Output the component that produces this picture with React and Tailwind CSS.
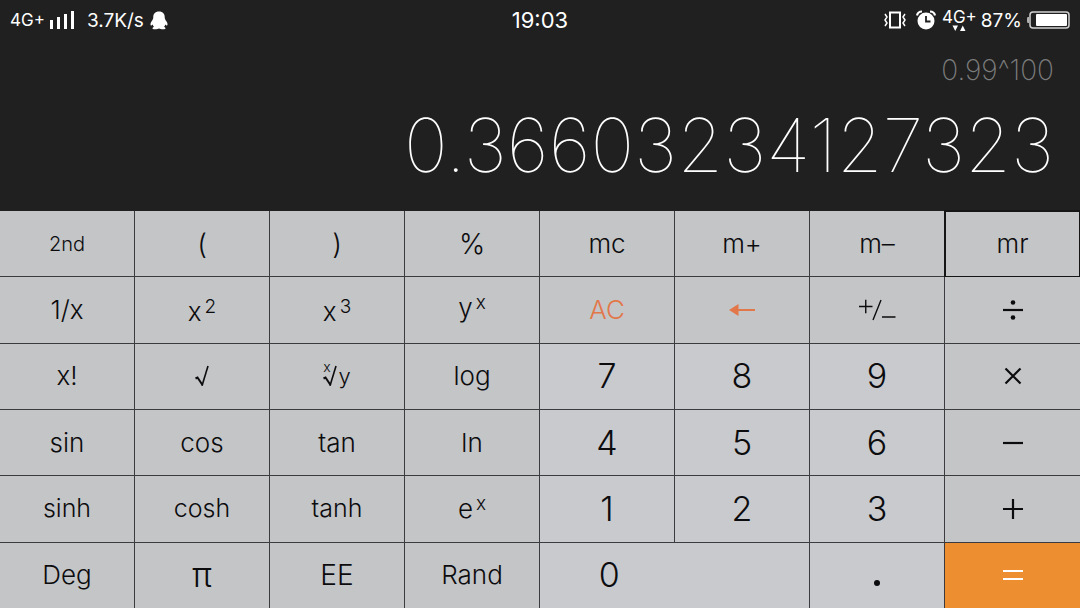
import React, { useState } from 'react';

const Power = ({ base, exp, className = '' }) => (
  <span className={`flex items-start gap-[3px] ${className}`}>
    <span className="pt-1">{base}</span>
    <sup className="top-0 text-[19px] leading-6">{exp}</sup>
  </span>
);

const RootSign = ({ className }) => (
  <svg className={className} viewBox="0 0 14 22" fill="none" stroke="currentColor" aria-hidden="true">
    <path d="M0.5 13.5L2.500 12.500L7.500 20" strokeWidth="2" />
    <path d="M7 20.8L13 1" strokeWidth="1.6" />
  </svg>
);

const NthRoot = () => (
  <span className="flex items-center">
    <span className="-mr-2 self-start text-[14px] leading-[4px]">x</span>
    <RootSign className="h-[22px] w-[14px]" />
    <span className="pl-[2px] text-[22px]">y</span>
  </span>
);

const PlusMinus = () => (
  <svg className="h-[22px] w-[38px]" viewBox="0 0 38 22" fill="none" stroke="currentColor" strokeWidth="1.4" aria-hidden="true">
    <path d="M1 7.5H14.500M7.750 0.800V14.300M15 21L23 1M24 18H37.500" />
  </svg>
);

const BackArrow = () => (
  <svg className="h-[12px] w-[26px]" viewBox="0 0 26 12" fill="currentColor" aria-hidden="true">
    <path d="M0 6L9.500 0V12Z" />
    <rect x="8" y="5" width="18" height="2" />
  </svg>
);

const OPERATORS = {
  divide: (
    <>
      <path d="M1 11H21" />
      <circle cx="11" cy="3.500" r="2.300" fill="currentColor" stroke="none" />
      <circle cx="11" cy="18.500" r="2.300" fill="currentColor" stroke="none" />
    </>
  ),
  multiply: <path d="M3.500 3.500L18.500 18.500M18.500 3.500L3.500 18.500" />,
  subtract: <path d="M1 11H21" />,
  add: <path d="M1 11H21M11 1V21" />,
  equals: <path d="M1 7H21M1 15H21" />,
};

const Operator = ({ name }) => (
  <svg className="size-[22px]" viewBox="0 0 22 22" fill="none" stroke="currentColor" strokeWidth="2.2" aria-hidden="true">
    {OPERATORS[name]}
  </svg>
);

const FN = 'bg-[#c4c5c7] text-[26px]';
const FN_SMALL = 'bg-[#c4c5c7] text-[25px]';
const FN_LARGE = 'bg-[#c4c5c7] text-[28px]';
const NUM = 'bg-[#c9cace] text-[34px]';

const KEYS = [
  { id: '2nd', style: 'bg-[#c4c5c7] text-[20px]' },
  { id: '(', style: FN_LARGE },
  { id: ')', style: FN_LARGE },
  { id: '%', style: FN_LARGE },
  { id: 'mc' },
  { id: 'm+' },
  { id: 'm–' },
  { id: 'mr', style: 'bg-[#c4c5c7] text-[26px] outline-2 -outline-offset-1 outline-[#151515]' },

  { id: '1/x' },
  { id: 'x squared', label: <Power base="x" exp="2" /> },
  { id: 'x cubed', label: <Power base="x" exp="3" /> },
  { id: 'y to the x', label: <Power base="y" exp="x" className="pb-2" /> },
  { id: 'AC', style: 'bg-[#c4c5c7] text-[26px] text-[#e2774a]' },
  { id: 'backspace', label: <BackArrow />, style: 'bg-[#c4c5c7] text-[#e2774a]' },
  { id: 'plus minus', label: <PlusMinus /> },
  { id: 'divide', label: <Operator name="divide" /> },

  { id: 'x!' },
  { id: 'square root', label: <RootSign className="h-[22px] w-[14px]" /> },
  { id: 'x root of y', label: <NthRoot /> },
  { id: 'log' },
  { id: '7', style: NUM },
  { id: '8', style: NUM },
  { id: '9', style: NUM },
  { id: 'multiply', label: <Operator name="multiply" /> },

  { id: 'sin' },
  { id: 'cos' },
  { id: 'tan' },
  { id: 'ln' },
  { id: '4', style: NUM },
  { id: '5', style: NUM },
  { id: '6', style: NUM },
  { id: 'subtract', label: <Operator name="subtract" /> },

  { id: 'sinh', style: FN_SMALL },
  { id: 'cosh', style: FN_SMALL },
  { id: 'tanh', style: FN_SMALL },
  { id: 'e to the x', label: <Power base="e" exp="x" className="pb-1" /> },
  { id: '1', style: NUM },
  { id: '2', style: NUM },
  { id: '3', style: NUM },
  { id: 'add', label: <Operator name="add" /> },

  { id: 'Deg' },
  { id: 'pi', label: 'π', style: 'bg-[#c4c5c7] text-[34px]' },
  { id: 'EE', style: FN_LARGE },
  { id: 'Rand' },
  { id: '0', label: <span className="w-1/2 pl-1 text-center">0</span>, style: 'col-span-2 justify-start! bg-[#c9cace] text-[34px]' },
  { id: 'point', label: <span className="mt-4 size-[6px] rounded-full bg-current" />, style: NUM },
  { id: 'equals', label: <Operator name="equals" />, style: 'bg-[#ed8f31] text-white' },
];

const Key = ({ id, label, style = FN, onPress }) => (
  <button
    type="button"
    aria-label={label ? id : undefined}
    onClick={() => onPress(id)}
    className={`flex items-center justify-center border-r border-b border-[#3c3c40] leading-none nth-[8n]:border-r-0 last:border-r-0 ${style}`}
  >
    {label || id}
  </button>
);

const StatusBar = () => (
  <div className="grid h-10 grid-cols-3 items-center px-[10px] text-[19px] leading-none font-normal text-white">
    <div className="flex items-center">
      <span className="text-[17px]">4G+</span>
      <svg className="ml-1 h-[18px] w-[26px]" viewBox="0 0 26 18" fill="currentColor" aria-hidden="true">
        <rect x="1" y="9" width="3" height="9" />
        <rect x="8" y="6" width="3" height="12" />
        <rect x="15" y="3" width="3" height="15" />
        <rect x="22" y="0" width="3" height="18" />
      </svg>
      <span className="ml-3">3.7K/s</span>
      <svg className="ml-1.5 h-[19px] w-[18px]" viewBox="0 0 16 19" fill="currentColor" preserveAspectRatio="none" aria-hidden="true">
        <path d="M8 0.500C4.500 0.500 2.800 3 2.900 6.500C2.900 8 2.200 9 1.300 10.500C0.300 12.200 0.100 14.300 0.900 14.600C1.400 14.700 1.900 14 2.300 13.600C2.500 14.500 3 15.300 3.500 15.800C2.500 16.300 2 17 2.300 17.700C3 18.600 6.500 18.600 8 17.600C9.500 18.600 13 18.600 13.700 17.700C14 17 13.500 16.300 12.500 15.800C13 15.300 13.500 14.500 13.700 13.600C14.100 14 14.600 14.700 15.100 14.600C15.900 14.300 15.700 12.200 14.700 10.500C13.800 9 13.100 8 13.100 6.500C13.200 3 11.500 0.500 8 0.500Z" />
      </svg>
    </div>
    <div className="text-center text-[22px]">19:03</div>
    <div className="flex items-center justify-end">
      <svg className="h-[18px] w-[22px]" viewBox="0 0 22 18" fill="none" stroke="currentColor" aria-hidden="true">
        <rect x="6" y="1.500" width="10" height="15" strokeWidth="2" />
        <path d="M1 3L3 6L1 9L3 12L1 15M21 3L19 6L21 9L19 12L21 15" strokeWidth="1.500" />
      </svg>
      <svg className="ml-2.5 h-[20px] w-[20px]" viewBox="0 0 20 20" fill="none" aria-hidden="true">
        <circle cx="10" cy="11" r="8.500" fill="currentColor" />
        <path d="M10 6V11.500H14.500" stroke="#202020" strokeWidth="1.800" />
        <path d="M1 5.500C1.500 3 3.500 1.500 6 1.500M19 5.500C18.500 3 16.500 1.500 14 1.500" stroke="currentColor" strokeWidth="2.200" />
      </svg>
      <div className="ml-1.5 flex flex-col items-center">
        <span className="text-[17px] leading-4">4G+</span>
        <svg className="h-[6px] w-[14px]" viewBox="0 0 14 6" fill="currentColor" aria-hidden="true">
          <path d="M0.500 0.500H6L3.250 6ZM8 6H13.500L10.750 0.500Z" />
        </svg>
      </div>
      <span className="ml-1">87%</span>
      <svg className="ml-1 h-[18px] w-[44px]" viewBox="0 0 44 18" fill="none" aria-hidden="true">
        <rect x="4" y="1" width="39" height="16" rx="3" stroke="#d0d0d0" strokeWidth="1.500" />
        <path d="M3 6H2C1 6 1 7 1 9C1 11 1 12 2 12H3Z" fill="#b0b0b0" />
        <rect x="10" y="3" width="31" height="12" rx="1" fill="#fff" />
      </svg>
    </div>
  </div>
);

export default function App() {
  const [pressed, setPressed] = useState('mr');

  return (
    <main
      data-pressed={pressed}
      className="flex min-h-screen flex-col overflow-hidden bg-[#202020] font-['Inter',sans-serif] font-light text-[#0c0c0e]"
    >
      <StatusBar />

      <section className="flex flex-col items-end px-[26px] pb-[21px]">
        <p className="pt-3 text-[28px] leading-9 font-extralight text-[#7c7c7c]">0.99^100</p>
        <output className="pt-3 text-[74px] leading-[90px] font-thin text-white">0.36603234127323</output>
      </section>

      {/* the bottom key borders are pushed past the screen edge */}
      <section className="-mb-px grid flex-1 grid-cols-8 grid-rows-6">
        {KEYS.map((key) => (
          <Key key={key.id} {...key} onPress={setPressed} />
        ))}
      </section>
    </main>
  );
}
